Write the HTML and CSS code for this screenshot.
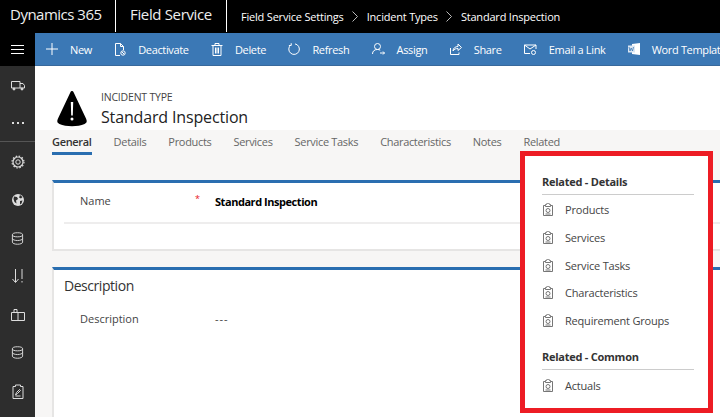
FILE: index.html
```html
<!DOCTYPE html>
<html lang="en">
<head>
    <meta charset="UTF-8">
    <link rel="stylesheet" href="styles.css">
    <title>Standard Inspection</title>
</head>
<body>
    <svg class="defs" width="0" height="0">
        <symbol id="clip" viewBox="0 0 10 13">
            <path d="M.5 2.500h2v-1h1a1.500 1.500 0 0 1 3 0h1v1h2v10h-9z M2.500 2.500v1h5v-1" fill="none" stroke="currentColor" stroke-width=".9"/>
            <circle cx="5" cy="7.500" r="2" fill="none" stroke="currentColor" stroke-width=".9"/>
            <path d="M2.500 11h5" fill="none" stroke="currentColor" stroke-width=".9"/>
        </symbol>
        <symbol id="db" viewBox="0 0 14 14">
            <ellipse cx="7" cy="3" rx="5.500" ry="2.200" fill="none" stroke="currentColor"/>
            <path d="M1.500 3v8c0 1.200 2.500 2.200 5.500 2.200s5.500-1 5.500-2.200v-8M1.500 7c0 1.200 2.500 2.200 5.500 2.200s5.500-1 5.500-2.200" fill="none" stroke="currentColor"/>
        </symbol>
        <symbol id="chev" viewBox="0 0 6 11">
            <path d="M.5 .5l5 5-5 5" fill="none" stroke="currentColor"/>
        </symbol>
    </svg>

    <header class="topbar">
        <div class="brand">Dynamics 365</div>
        <div class="app">Field Service</div>
        <nav class="crumbs">
            <span>Field Service Settings</span><svg width="6" height="11"><use href="#chev"/></svg>
            <span>Incident Types</span><svg width="6" height="11"><use href="#chev"/></svg>
            <span>Standard Inspection</span>
        </nav>
    </header>

    <div class="shell">
        <aside class="side">
            <div class="burger"><b></b><b></b><b></b></div>
            <div class="side-group first">
                <div class="side-icon">
                    <svg width="14" height="11" viewBox="0 0 14 11" fill="none" stroke="currentColor"><path d="M.5 1.500h8.500v6.500h-8.500z M9 3.500h3l1.500 2v2.500h-4.500"/><circle cx="3" cy="9" r="1" fill="currentColor"/><circle cx="11" cy="9" r="1" fill="currentColor"/></svg>
                </div>
                <div class="side-icon dots"><b></b><b></b><b></b></div>
            </div>
            <div class="side-group rest">
                <div class="side-icon">
                    <svg width="14" height="14" viewBox="0 0 14 14" fill="none" stroke="currentColor"><circle cx="7" cy="7" r="2.200"/><circle cx="7" cy="7" r="5" stroke-width="1.200"/><circle cx="7" cy="7" r="6" stroke-dasharray="1.500 1.640" stroke-width="1.200"/></svg>
                </div>
                <div class="side-icon">
                    <svg width="14" height="14" viewBox="0 0 14 14"><circle cx="7" cy="7" r="6" fill="currentColor"/><path d="M3 3.500l3 .5 1 2-2 1.500 .5 3-2-1.500-1-3z M9 2l2.500 2-1.500 1.500-2-1z M9 8l2.500-.5-1 3-1.500 1z" fill="#2d2d2d"/></svg>
                </div>
                <div class="side-icon"><svg width="13" height="13"><use href="#db"/></svg></div>
                <div class="side-icon">
                    <svg width="13" height="16" viewBox="0 0 13 16" fill="none" stroke="currentColor"><path d="M4.500 1v13M1.500 11l3 3.500 3-3.500M11 1v10M11 13v1.500"/></svg>
                </div>
                <div class="side-icon">
                    <svg width="14" height="13" viewBox="0 0 14 13" fill="none" stroke="currentColor"><path d="M.5 4.500h13v8h-13z M7 4.500v8 M3 4.500v-3h3v3"/></svg>
                </div>
                <div class="side-icon"><svg width="13" height="13"><use href="#db"/></svg></div>
                <div class="side-icon last">
                    <svg width="12" height="15" viewBox="0 0 12 15" fill="none" stroke="currentColor"><path d="M1 2.500h2.500v-1.500h5v1.500h2.500v12h-10z M3.500 11l1-2.500 3-3 1 1-3 3z M3.500 12h5"/></svg>
                </div>
            </div>
        </aside>

        <div class="main">
            <div class="commands">
                <div class="cmd"><svg width="12" height="12" viewBox="0 0 12 12" stroke="currentColor"><path d="M6 0v12M0 6h12"/></svg><span>New</span></div>
                <div class="cmd"><svg width="12" height="13" viewBox="0 0 12 13" fill="none" stroke="currentColor"><path d="M6 12.500h-4.500v-12h5l3 3v3.500M6.500 .5v3h3"/><circle cx="9" cy="10" r="2.200"/><path d="M7.800 8.800l2.400 2.400"/></svg><span>Deactivate</span></div>
                <div class="cmd"><svg width="12" height="13" viewBox="0 0 12 13" fill="none" stroke="currentColor"><path d="M2 2.500h8v10h-8z M.5 2.500h11M4 2.500v-2h4v2M4.500 4.500v6M6 4.500v6M7.500 4.500v6"/></svg><span>Delete</span></div>
                <div class="cmd"><svg width="12" height="12" viewBox="0 0 12 12" fill="none" stroke="currentColor"><path d="M3 1.800a5.300 5.300 0 1 0 4-.9M3.200 .2v2.300h-2.300"/></svg><span>Refresh</span></div>
                <div class="cmd"><svg width="13" height="12" viewBox="0 0 13 12" fill="none" stroke="currentColor"><circle cx="5.500" cy="3.500" r="3"/><path d="M.5 11c0-3 2-4.500 5-4.500 1 0 2 .2 2.700 .7M8 10h4.500M11 8.500l1.500 1.500-1.500 1.500"/></svg><span>Assign</span></div>
                <div class="cmd"><svg width="12" height="12" viewBox="0 0 12 12" fill="none" stroke="currentColor"><path d="M.5 5v6.500h8.500v-2M3 8c0-3 2.500-4.500 5-4.500v-2.500l3.500 3.500-3.500 3v-2c-2 0-4 .5-5 2.500z"/></svg><span>Share</span></div>
                <div class="cmd"><svg width="13" height="11" viewBox="0 0 13 11" fill="none" stroke="currentColor"><path d="M6 9.500h-5.500v-8.500h11.500v4M.5 1l5.500 4 6-4"/><circle cx="9.500" cy="8.500" r="2"/></svg><span>Email a Link</span></div>
                <div class="cmd"><svg width="12" height="12" viewBox="0 0 12 12"><path d="M4 1l8-1v12l-8-1z" fill="#fff"/><rect x="0" y="2.500" width="7" height="7" fill="#dce6f2"/><path d="M1 4l1 4 1.200-3 1.300 3 1-4" fill="none" stroke="#3b78b5" stroke-width=".8"/></svg><span>Word Template</span></div>
            </div>

            <div class="record-head">
                <svg class="warn" width="30" height="36" viewBox="0 0 30 36"><path d="M15 0c-.8 0-1.300 .6-1.700 1.400l-12.300 26c-1.200 2.600-1 4.600 1.400 5.600 7 3 18.200 3 25.200 0 2.400-1 2.600-3 1.400-5.600l-12.300-26c-.4-.8-.9-1.400-1.700-1.400z" fill="#000"/><path d="M13.800 11h2.400l-.4 13.500h-1.600z" fill="#fff"/><circle cx="15" cy="28" r="1.500" fill="#fff"/></svg>
                <div>
                    <div class="entity">INCIDENT TYPE</div>
                    <h1>Standard Inspection</h1>
                </div>
            </div>

            <div class="form-area">
                <ul class="tabs">
                    <li class="active">General</li>
                    <li>Details</li>
                    <li>Products</li>
                    <li>Services</li>
                    <li>Service Tasks</li>
                    <li>Characteristics</li>
                    <li>Notes</li>
                    <li>Related</li>
                </ul>

                <section class="card name-card">
                    <div class="row">
                        <span class="label">Name</span>
                        <span class="req">*</span>
                        <strong>Standard Inspection</strong>
                    </div>
                </section>

                <section class="card desc-card">
                    <h2>Description</h2>
                    <div class="row plain">
                        <span class="label">Description</span>
                        <span class="req"></span>
                        <span class="value">---</span>
                    </div>
                </section>
            </div>
        </div>
    </div>

    <div class="flyout">
        <h3>Related - Details</h3>
        <div class="fly-item"><svg width="10" height="13"><use href="#clip"/></svg>Products</div>
        <div class="fly-item"><svg width="10" height="13"><use href="#clip"/></svg>Services</div>
        <div class="fly-item"><svg width="10" height="13"><use href="#clip"/></svg>Service Tasks</div>
        <div class="fly-item"><svg width="10" height="13"><use href="#clip"/></svg>Characteristics</div>
        <div class="fly-item"><svg width="10" height="13"><use href="#clip"/></svg>Requirement Groups</div>
        <h3 class="second">Related - Common</h3>
        <div class="fly-item"><svg width="10" height="13"><use href="#clip"/></svg>Actuals</div>
    </div>
</body>
</html>
```

FILE: styles.css
```css
* {
    box-sizing: border-box;
}

html, body {
    margin: 0;
    height: 417px;
    overflow: hidden;
}

body {
    font-family: "Open Sans", "Noto Sans", sans-serif;
    font-size: 11px;
    background-color: #fff;
    position: relative;
}

.defs {
    position: absolute;
}

/* top bar */
.topbar {
    height: 33px;
    background-color: #000;
    color: #fff;
    display: flex;
    align-items: center;
}

.brand, .app {
    height: 32px;
    align-self: flex-start;
    font-size: 15px;
    line-height: 29px;
    border-right: 1px solid #fff;
    color: #eee;
}

.brand {
    width: 116px;
    padding-left: 10px;
    letter-spacing: -0.5px;
}

.app {
    width: 111px;
    padding-left: 14px;
    letter-spacing: -0.35px;
}

.crumbs {
    margin-left: 14px;
    margin-top: -1px;
    display: flex;
    align-items: center;
    gap: 8.5px;
    font-size: 11px;
    letter-spacing: -0.2px;
}

.crumbs svg {
    color: #bbb;
    margin-top: 1px;
}

/* left rail */
.shell {
    display: flex;
    height: 384px;
}

.side {
    width: 35px;
    flex: none;
    background-color: #2d2d2d;
    color: #ddd;
}

.burger {
    height: 33px;
    background-color: #000;
    display: flex;
    flex-direction: column;
    align-items: center;
    justify-content: center;
    gap: 3px;
}

.burger b {
    width: 13px;
    height: 1px;
    background-color: #fff;
}

.side-group.first {
    height: 76px;
    border-bottom: 1px solid #555;
}

.side-group.rest {
    padding-top: 1px;
}

.side-icon {
    height: 38px;
    display: flex;
    align-items: center;
    justify-content: center;
}

.side-icon.last {
    margin-top: 1px;
}

.dots {
    gap: 3px;
}

.dots b {
    width: 2px;
    height: 2px;
    background-color: #ddd;
}

/* command bar */
.main {
    flex: 1;
    min-width: 0;
    display: flex;
    flex-direction: column;
}

.commands {
    height: 33px;
    background-color: #3b78b5;
    border-bottom: 1px solid #38699c;
    color: #fff;
    display: flex;
    align-items: center;
    padding-left: 11px;
    gap: 22.3px;
    white-space: nowrap;
    overflow: hidden;
    font-size: 11px;
    letter-spacing: -0.35px;
}

.cmd {
    display: flex;
    align-items: center;
    gap: 12px;
    flex: none;
}

/* record header */
.record-head {
    height: 64px;
    display: flex;
    padding: 25px 0 0 22px;
    gap: 14px;
    flex: none;
}

.warn {
    flex: none;
}

.entity {
    font-size: 10.5px;
    line-height: 14px;
    margin-top: -1px;
    color: #444;
    letter-spacing: -0.2px;
}

h1 {
    margin: 2px 0 0;
    font-size: 16px;
    line-height: 22px;
    font-weight: 400;
    color: #222;
    letter-spacing: -0.15px;
    white-space: nowrap;
}

/* form */
.form-area {
    flex: 1;
    background-color: #f7f6f5;
    padding-left: 17px;
    overflow: hidden;
}

.tabs {
    list-style: none;
    margin: 0;
    padding: 0;
    height: 50px;
    display: flex;
    gap: 22px;
    color: #666;
    font-size: 11px;
    letter-spacing: -0.32px;
    white-space: nowrap;
}

.tabs li {
    height: 25px;
    padding-top: 4px;
}

.tabs .active {
    color: #333;
    font-weight: 600;
    border-bottom: 3px solid #2a6eb0;
}

.card {
    background-color: #fff;
    border-top: 3px solid #2a6eb0;
    border-left: 2px solid #e6e5e4;
    border-bottom: 2px solid #e6e5e4;
    color: #444;
}

.name-card {
    height: 71px;
    margin-bottom: 16px;
}

.desc-card {
    height: 160px;
}

.row {
    display: flex;
    margin-left: 10px;
    padding: 9px 0 0 16px;
    height: 41px;
    border-bottom: 2px solid #eeeded;
    line-height: 18px;
}

.row.plain {
    border-bottom: 0;
    padding-top: 13px;
}

.label {
    width: 115px;
    flex: none;
}

.req {
    width: 20px;
    flex: none;
    color: #e81123;
    font-size: 9px;
    line-height: 14px;
}

.row strong {
    color: #000;
    font-weight: 700;
    padding-top: 1px;
    letter-spacing: -0.45px;
}

.value {
    letter-spacing: 1px;
}

.desc-card h2 {
    margin: 0;
    padding: 5px 0 0 10px;
    font-size: 14px;
    line-height: 22px;
    font-weight: 400;
    letter-spacing: -0.45px;
    color: #333;
}

/* related flyout */
.flyout {
    position: absolute;
    left: 520px;
    top: 151px;
    width: 193px;
    height: 262px;
    background-color: #fff;
    border: 5px solid #ed1c24;
    padding: 18px 14px 0 17px;
    color: #444;
    font-size: 11px;
    letter-spacing: -0.2px;
}

.flyout h3 {
    margin: 0 0 1px;
    height: 21px;
    line-height: 16px;
    font-size: 11px;
    font-weight: 700;
    letter-spacing: -0.25px;
    color: #333;
    border-bottom: 1px solid #ccc;
}

.flyout h3.second {
    margin-top: 15px;
    height: 21px;
}

.fly-item {
    height: 27.7px;
    display: flex;
    align-items: center;
    gap: 12px;
}

.fly-item svg {
    color: #666;
    flex: none;
    margin-left: 1px;
}
```
